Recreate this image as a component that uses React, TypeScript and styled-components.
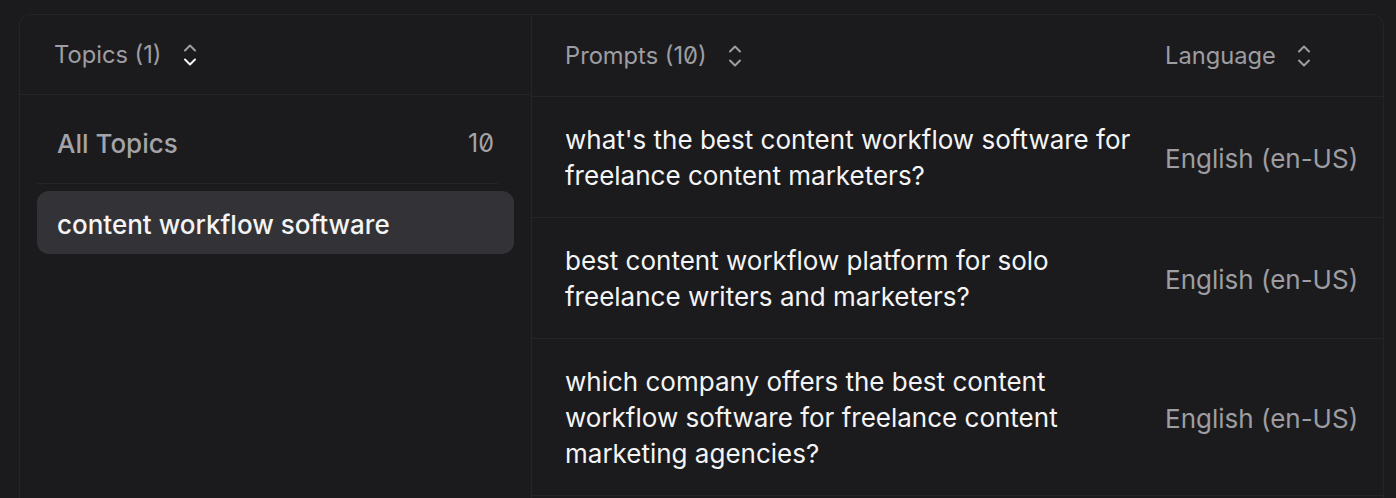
import styled, { createGlobalStyle } from "styled-components";
import * as React from "react";

const GlobalStyle = createGlobalStyle`
  html, body {
    margin: 0;
    padding: 0;
    background: #1b1b1d;
    height: 100%;
    overflow: hidden;
  }
  body {
    font-family: Inter, "Noto Sans", sans-serif;
    font-feature-settings: "zero" 1;
    -webkit-font-smoothing: antialiased;
  }
`;

const Page = styled.div`
  padding: 14px 12px 0 19px;
`;

const Card = styled.div`
  display: grid;
  grid-template-columns: 512px 1fr;
  border: 1px solid #252528;
  border-bottom: none;
  border-radius: 12px 12px 0 0;
  height: 520px;
  background: #1b1b1d;
`;

const TopicsPanel = styled.div`
  display: flex;
  flex-direction: column;
  border-right: 1px solid #252528;
`;

const PromptsPanel = styled.div`
  display: flex;
  flex-direction: column;
`;

const HeaderRow = styled.div<{ $height: number }>`
  display: flex;
  align-items: center;
  height: ${(p) => p.$height}px;
  border-bottom: 1px solid #252528;
  box-sizing: border-box;
`;

const HeaderCell = styled.div<{ $pad: number; $width?: number }>`
  display: flex;
  align-items: center;
  gap: 21px;
  box-sizing: border-box;
  padding-left: ${(p) => p.$pad}px;
  width: ${(p) => (p.$width ? `${p.$width}px` : "auto")};
  font-size: 23.7px;
  color: #9d9da2;
`;

const TopicList = styled.div`
  display: flex;
  flex-direction: column;
  padding: 8px 17px;
`;

const AllTopicsRow = styled.div`
  display: flex;
  align-items: center;
  justify-content: space-between;
  height: 80px;
  padding: 0 20px;
  font-size: 26px;
  font-weight: 500;
  color: #a3a3a8;
`;

const Count = styled.span`
  font-size: 25px;
  font-weight: 400;
  color: #a3a3a8;
`;

const Divider = styled.div`
  height: 1px;
  background: #252528;
  margin: 0 16px 7px 0;
`;

const TopicItem = styled.div<{ $active?: boolean }>`
  display: flex;
  align-items: center;
  height: 63px;
  padding: 4px 20px 0;
  box-sizing: border-box;
  border-radius: 12px;
  background: ${(p) => (p.$active ? "#333337" : "transparent")};
  color: #f4f4f5;
  font-size: 26px;
  font-weight: 500;
`;

const PromptRow = styled.div`
  display: grid;
  grid-template-columns: 613px 1fr;
  align-items: center;
  padding: 25px 0 23px;
  border-bottom: 1px solid #252528;
`;

const PromptText = styled.div`
  padding: 0 0 0 33px;
  font-size: 26px;
  line-height: 36px;
  color: #f4f4f5;
`;

const LanguageText = styled.div`
  padding-left: 20px;
  font-size: 26px;
  color: #9d9da2;
  white-space: nowrap;
`;

function SortIcon({ active }: { active?: boolean }) {
  return (
    <svg width="14" height="24" viewBox="0 0 14 24" fill="none">
      <polyline
        points="2,7.5 7,2.5 12,7.5"
        stroke="#9d9da2"
        strokeWidth="2"
        strokeLinecap="round"
        strokeLinejoin="round"
      />
      <polyline
        points="2,16.5 7,21.5 12,16.5"
        stroke={active ? "#f4f4f5" : "#9d9da2"}
        strokeWidth="2"
        strokeLinecap="round"
        strokeLinejoin="round"
      />
    </svg>
  );
}

const prompts = [
  "what's the best content workflow software for freelance content marketers?",
  "best content workflow platform for solo freelance writers and marketers?",
  "which company offers the best content workflow software for freelance content marketing agencies?",
];

export default function App() {
  return (
    <>
      <GlobalStyle />
      <Page>
        <Card>
          <TopicsPanel>
            <HeaderRow $height={80}>
              <HeaderCell $pad={34}>
                Topics (1) <SortIcon active />
              </HeaderCell>
            </HeaderRow>
            <TopicList>
              <AllTopicsRow>
                <span>All Topics</span>
                <Count>10</Count>
              </AllTopicsRow>
              <Divider />
              <TopicItem $active>content workflow software</TopicItem>
            </TopicList>
          </TopicsPanel>
          <PromptsPanel>
            <HeaderRow $height={82}>
              <HeaderCell $pad={33} $width={613}>
                Prompts (10) <SortIcon />
              </HeaderCell>
              <HeaderCell $pad={20}>
                Language <SortIcon />
              </HeaderCell>
            </HeaderRow>
            {prompts.map((p, i) => (
              <PromptRow key={i}>
                <PromptText>{p}</PromptText>
                <LanguageText>English (en-US)</LanguageText>
              </PromptRow>
            ))}
          </PromptsPanel>
        </Card>
      </Page>
    </>
  );
}
